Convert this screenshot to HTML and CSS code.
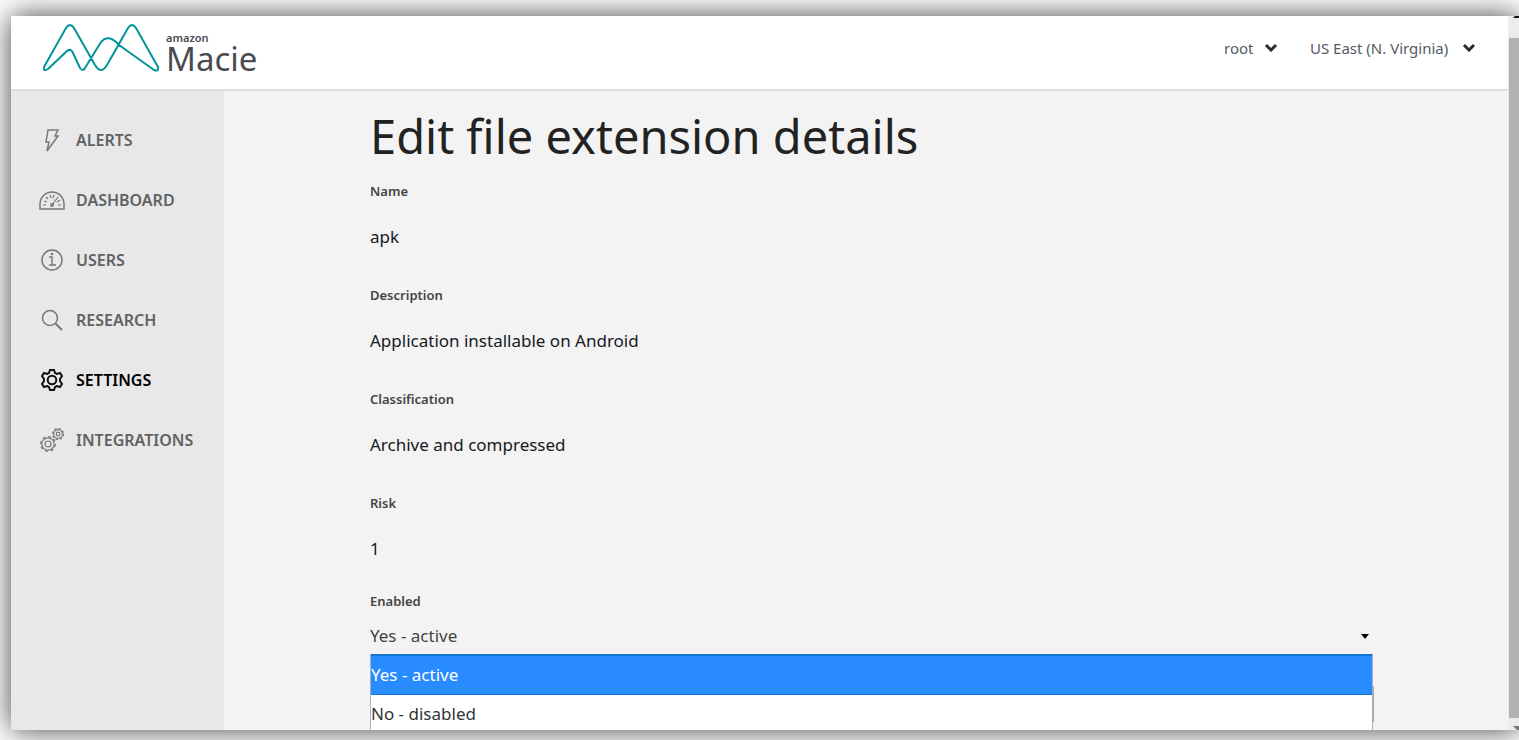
FILE: index.html
```
<!DOCTYPE html>
<html lang="en">
<head>
  <meta charset="UTF-8" />
  <meta name="viewport" content="width=device-width, initial-scale=1" />
  <title>Amazon Macie | Edit file extension details</title>
  <link rel="stylesheet" href="styles.css">
</head>
<body>
  <div class="window">
    <div class="app">
      <header class="header">
        <a class="logo" href="#">
          <svg width="118" height="50" viewBox="0 0 118 50" fill="none" stroke="#009499" stroke-width="2" stroke-linejoin="round" stroke-linecap="round">
            <path d="M1 43 L23 4 Q27 -2 31 4 L52 41 Q58 51 64 41 L85 4 Q89 -2 93 4 L115 43 Q116 48 111 46 L76 21 C69 13 63 12 58 18 L42 44 Q40 48 37 44 L30 29 Q28 24 24 27 L5 45 Q0 48 1 43 Z" />
          </svg>
          <span class="logo-text">
            <span class="logo-small">amazon</span>
            <span class="logo-big">Macie</span>
          </span>
        </a>
        <div class="header-menus">
          <label class="header-menu">
            <select aria-label="Account">
              <option>root</option>
            </select>
            <svg width="14" height="9" viewBox="0 0 14 9" fill="none" stroke="#2b2b2b" stroke-width="3"><path d="M2 2 L7 7 L12 2" /></svg>
          </label>
          <label class="header-menu region">
            <select aria-label="Region">
              <option>US East (N. Virginia)</option>
            </select>
            <svg width="14" height="9" viewBox="0 0 14 9" fill="none" stroke="#2b2b2b" stroke-width="3"><path d="M2 2 L7 7 L12 2" /></svg>
          </label>
        </div>
      </header>

      <div class="body">
        <nav class="sidebar">
          <a href="#">
            <svg width="26" height="26" viewBox="0 0 26 26"><path d="M9 3 H19 L16 9 H19 L8 24 L10 15 H7 Z" /></svg>
            Alerts
          </a>
          <a href="#">
            <svg width="26" height="26" viewBox="0 0 26 26"><path d="M1 22 V17 A12 12 0 0 1 25 17 V22 Z" /><path d="M4 18 H7 M5 14 L8 15 M7 10 L9 12 M11 8 L12 11 M15 8 L14 11 M21 13 L18 15 M22 18 H19 M13 18 L19 10" stroke-width="1.2" /><circle cx="13" cy="18" r="1.3" /></svg>
            Dashboard
          </a>
          <a href="#">
            <svg width="26" height="26" viewBox="0 0 26 26"><circle cx="13" cy="13" r="10" /><path d="M10 10 H13 V18 M10 18 H17" /><circle cx="13" cy="7" r="0.6" /></svg>
            Users
          </a>
          <a href="#">
            <svg width="26" height="26" viewBox="0 0 26 26"><circle cx="11" cy="11" r="7.5" /><path d="M16.5 16.5 L23 23" stroke-width="2" /></svg>
            Research
          </a>
          <a href="#" class="active">
            <svg width="26" height="26" viewBox="0 0 26 26"><path d="M11 3 H15 L16 6 L18 7 L21 6 L23 9 L21 12 V14 L23 17 L21 20 L18 19 L16 20 L15 23 H11 L10 20 L8 19 L5 20 L3 17 L5 14 V12 L3 9 L5 6 L8 7 L10 6 Z" /><circle cx="13" cy="13" r="4.3" /></svg>
            Settings
          </a>
          <a href="#">
            <svg width="26" height="26" viewBox="0 0 26 26" class="gears">
              <circle cx="9" cy="17" r="6.2" /><circle cx="9" cy="17" r="7.4" stroke-dasharray="3 2.8" /><circle cx="9" cy="17" r="3" />
              <circle cx="19" cy="7" r="4.4" /><circle cx="19" cy="7" r="5.5" stroke-dasharray="2.3 2" /><circle cx="19" cy="7" r="1.8" />
            </svg>
            Integrations
          </a>
        </nav>

        <main class="content">
          <h1>Edit file extension details</h1>
          <dl class="details">
            <dt>Name</dt>
            <dd>apk</dd>
            <dt>Description</dt>
            <dd>Application installable on Android</dd>
            <dt>Classification</dt>
            <dd>Archive and compressed</dd>
            <dt>Risk</dt>
            <dd>1</dd>
          </dl>

          <div class="field">
            <label for="enabled">Enabled</label>
            <div class="select-wrap">
              <select id="enabled">
                <option selected>Yes - active</option>
                <option>No - disabled</option>
              </select>
              <svg class="caret" width="10" height="5" viewBox="0 0 10 5"><path d="M1 0 H9 L5 5 Z" /></svg>
              <ul class="options" role="listbox" aria-label="Enabled">
                <li role="option" aria-selected="true" class="selected">Yes - active</li>
                <li role="option" aria-selected="false">No - disabled</li>
              </ul>
            </div>
          </div>
        </main>
      </div>
    </div>

    <div class="scrollbar">
      <svg width="22" height="22" viewBox="0 0 22 22"><path d="M5 2 L11 -4 L17 2 Z" fill="#111" /></svg>
      <div class="thumb"></div>
      <svg width="22" height="12" viewBox="0 0 22 12"><path d="M5 8 H17 L11 14 Z" fill="#777" /></svg>
    </div>
  </div>
</body>
</html>
```
FILE: styles.css
```
* {
  box-sizing: border-box;
}

body {
  margin: 0;
  height: 100vh;
  padding: 16px 0 10px 11px;
  overflow: hidden;
  background: #fff;
  font-family: "Noto Sans", "Open Sans", sans-serif;
  font-size: 17px;
  line-height: 24px;
  color: #16191f;
}

select {
  appearance: none;
  background: none;
  border: none;
  padding: 0;
  font: inherit;
  color: inherit;
  cursor: pointer;
}

.window {
  display: flex;
  height: 100%;
  box-shadow: 0 0 28px rgba(0, 0, 0, 0.75);
}

.app {
  flex: 1;
  min-width: 0;
  display: flex;
  flex-direction: column;
  overflow: hidden;
  background: #f3f3f3;
}

/* Header */
.header {
  display: flex;
  justify-content: space-between;
  height: 75px;
  padding: 0 32px;
  background: #fff;
  border-bottom: 2px solid #dedede;
}

.logo {
  display: flex;
  align-items: flex-start;
  gap: 5px;
  padding-top: 8px;
  color: #4a4b50;
  text-decoration: none;
}

.logo-text {
  display: flex;
  flex-direction: column;
  padding-top: 8px;
}

.logo-small {
  font-size: 11px;
  font-weight: 600;
  line-height: 12px;
}

.logo-big {
  font-size: 33px;
  line-height: 29px;
}

.header-menus {
  display: flex;
  align-items: center;
  gap: 32px;
  padding-bottom: 10px;
  font-size: 15px;
  color: #545b64;
}

.header-menu {
  display: flex;
  align-items: center;
  gap: 10px;
}

.region {
  gap: 13px;
}

/* Sidebar */
.body {
  flex: 1;
  min-height: 0;
  display: flex;
}

.sidebar {
  flex: 0 0 213px;
  display: flex;
  flex-direction: column;
  gap: 34px;
  padding: 36px 0 0 28px;
  background: #e8e8e8;
}

.sidebar a {
  display: flex;
  align-items: center;
  gap: 11px;
  height: 26px;
  color: #606264;
  font-size: 16px;
  font-weight: 600;
  text-transform: uppercase;
  text-decoration: none;
}

.sidebar svg {
  fill: none;
  stroke: #777;
  stroke-width: 1.5;
}

.sidebar .gears {
  stroke-width: 1.2;
}

.sidebar .active {
  color: #000;
}

.sidebar .active svg {
  stroke: #111;
  stroke-width: 2;
}

/* Content */
.content {
  flex: 1;
  min-width: 0;
  padding: 17px 135px 0 146px;
}

h1 {
  margin: 0 0 17px;
  font-size: 47px;
  font-weight: 400;
  line-height: 56px;
  color: #222;
}

.details {
  margin: 0;
}

.details dt,
.field label {
  display: block;
  font-size: 13px;
  font-weight: 600;
  line-height: 20px;
  color: #444;
}

.details dd {
  margin: 24px 0 36px;
}

.details dd:last-child {
  margin-bottom: 30px;
}

.select-wrap {
  position: relative;
  display: flex;
  align-items: center;
  margin-top: 7px;
}

.select-wrap select {
  width: 100%;
  height: 36px;
  color: #444;
}

.caret {
  position: absolute;
  right: 3px;
}

/* Open list under the select */
.options {
  position: absolute;
  top: 100%;
  left: 0;
  right: 0;
  margin: 0;
  padding: 0;
  list-style: none;
  background: #fff;
  border: 1px solid #9fb2cc;
  border-top: none;
  color: #333;
}

.options::after {
  content: "";
  position: absolute;
  top: 32px;
  right: -2px;
  width: 2px;
  height: 36px;
  background: #a9a9ad;
}

.options li {
  line-height: 38px;
}

.options .selected {
  background: #288bff;
  border-top: 2px solid #1577d2;
  border-bottom: 1px solid #1577d2;
  color: #fff;
}

.scrollbar {
  flex: 0 0 11px;
  display: flex;
  flex-direction: column;
  overflow: hidden;
  background: #ececec;
}

.scrollbar svg {
  flex: none;
}

.thumb {
  flex: 1;
  margin-left: 1px;
  background: #b1b1b1;
}
```
